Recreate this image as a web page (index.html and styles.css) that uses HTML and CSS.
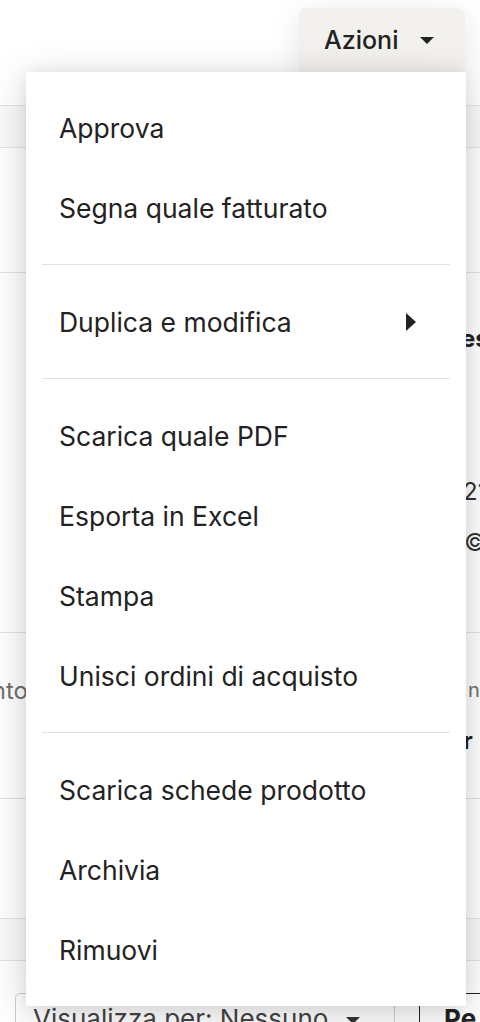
FILE: index.html
```html
<!DOCTYPE html>
<html lang="it">
<head>
<meta charset="utf-8">
<title>Azioni</title>
<link rel="stylesheet" href="styles.css">
</head>
<body>
<div class="page">
  <header class="topbar">
    <button class="actions-btn" type="button">
      <span>Azioni</span>
      <svg class="caret" width="14" height="7" viewBox="0 0 14 7"><path d="M0 0h14L7 7z" fill="#222"/></svg>
    </button>
  </header>
  <div class="row row-head"></div>
  <div class="row row-a"></div>
  <div class="row row-b">
    <div class="right-col">
      <span class="bg-bold line-1">es</span>
      <span class="bg-reg line-2">21</span>
      <span class="bg-reg line-3">©</span>
    </div>
  </div>
  <div class="row row-c">
    <div class="left-col"><span class="bg-muted">Pagamento</span></div>
    <div class="right-col">
      <span class="bg-muted small line-4">n</span>
      <span class="bg-bold line-5">r</span>
    </div>
  </div>
  <div class="row row-d"></div>
  <div class="row row-e"></div>
  <footer class="toolbar">
    <div class="select">Visualizza per: Nessuno <svg class="sel-caret" width="14" height="7" viewBox="0 0 14 7"><path d="M0 0h14L7 7z" fill="#333"/></svg></div>
    <div class="per-btn">Pe</div>
  </footer>

  <div class="menu" role="menu">
    <div class="item">Approva</div>
    <div class="item">Segna quale fatturato</div>
    <div class="sep"></div>
    <div class="item item-sub">
      <span>Duplica e modifica</span>
      <svg class="sub-arrow" width="10" height="18" viewBox="0 0 10 18"><path d="M0 0L10 9L0 18z" fill="#222"/></svg>
    </div>
    <div class="sep"></div>
    <div class="item">Scarica quale PDF</div>
    <div class="item">Esporta in Excel</div>
    <div class="item">Stampa</div>
    <div class="item">Unisci ordini di acquisto</div>
    <div class="sep"></div>
    <div class="item">Scarica schede prodotto</div>
    <div class="item">Archivia</div>
    <div class="item">Rimuovi</div>
  </div>
</div>
</body>
</html>
```

FILE: styles.css
```css
* { box-sizing: border-box; }
html, body {
  margin: 0;
  padding: 0;
  background: #ffffff;
  overflow: hidden;
}
body {
  width: 480px;
  height: 1022px;
  font-family: "Inter", "Liberation Sans", sans-serif;
  color: #222222;
}
.page {
  position: relative;
  width: 480px;
  height: 1022px;
  overflow: hidden;
}
.topbar {
  height: 106px;
  border-bottom: 1px solid #e3e3e3;
  display: flex;
  justify-content: flex-end;
  align-items: flex-start;
  padding: 8px 15px 0 0;
}
.actions-btn {
  height: 64px;
  width: 166px;
  border: none;
  border-radius: 7px 7px 0 0;
  background: #f3f1ed;
  font-family: inherit;
  font-size: 25px;
  font-weight: 500;
  color: #222;
  display: flex;
  align-items: center;
  padding: 0 28px 0 25px;
  gap: 22px;
  box-shadow: 0 6px 30px rgba(0,0,0,0.10);
}
.caret { display: block; }

.row {
  border-bottom: 1px solid #e3e3e3;
  display: flex;
  justify-content: space-between;
  position: relative;
}
.row-head { height: 42px; background: #fafafa; }
.row-a { height: 125px; }
.row-b { height: 360px; }
.row-c { height: 166px; }
.row-d { height: 120px; }
.row-e { height: 42px; background: #fafafa; }

.right-col {
  display: flex;
  flex-direction: column;
  align-items: flex-start;
  margin-left: auto;
  width: 33px;
  white-space: nowrap;
  font-size: 24px;
}
.left-col {
  width: 180px;
  flex-shrink: 0;
  margin-left: -152px;
  padding-top: 43px;
  font-size: 24px;
  white-space: nowrap;
  text-align: right;
}
.bg-bold { font-weight: 700; color: #222; }
.bg-reg { color: #333; }
.bg-muted { color: #6f6f6f; }
.small { font-size: 20px; }
.line-1 { margin-top: 51px; margin-left: 14px; }
.line-2 { margin-top: 124px; margin-left: 16px; }
.line-3 { margin-top: 22px; margin-left: 17px; }
.line-4 { margin-top: 45px; margin-left: 21px; }
.line-5 { margin-top: 24px; margin-left: 16px; }

.toolbar {
  display: flex;
  align-items: flex-start;
  padding: 32px 0 0 15px;
  gap: 24px;
}
.select {
  flex-shrink: 0;
  width: 380px;
  height: 50px;
  border: 1px solid #cfcfcf;
  border-radius: 5px;
  font-size: 26px;
  color: #444;
  padding: 9px 0 0 17px;
  white-space: nowrap;
}
.sel-caret { margin-left: 10px; vertical-align: middle; }
.per-btn {
  flex-shrink: 0;
  height: 50px;
  width: 100px;
  border: 1px solid #222;
  border-right: none;
  border-radius: 5px 0 0 5px;
  font-size: 26px;
  font-weight: 700;
  padding: 9px 0 0 24px;
}

.menu {
  position: absolute;
  top: 72px;
  left: 26px;
  width: 440px;
  background: #ffffff;
  border-radius: 2px;
  padding: 16px 0;
  box-shadow: 0 8px 40px rgba(0,0,0,0.18), 0 0 14px rgba(0,0,0,0.06);
}
.item {
  height: 80px;
  display: flex;
  align-items: center;
  padding: 0 50px 0 33px;
  font-size: 26.5px;
  color: #222;
  white-space: nowrap;
}
.item-sub { justify-content: space-between; }
.sub-arrow { display: block; }
.sep {
  height: 1px;
  background: #e3e1db;
  margin: 16px 16px 17px;
}
```
